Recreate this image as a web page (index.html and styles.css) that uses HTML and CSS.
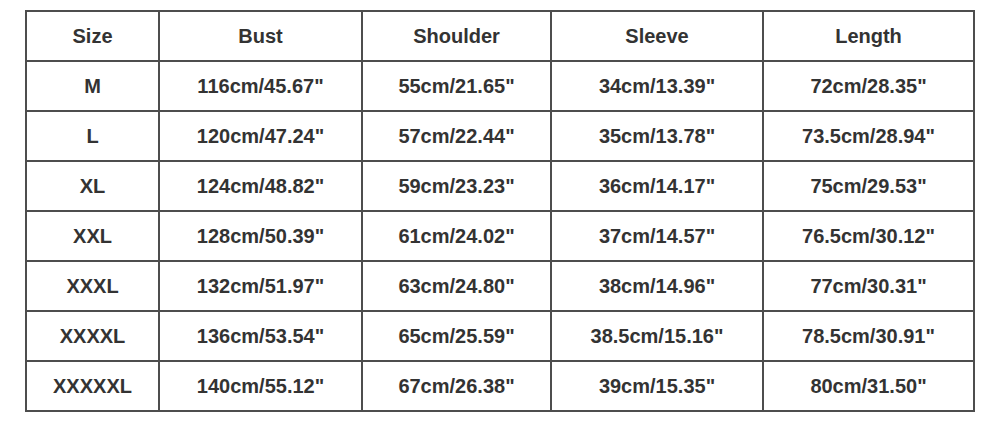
FILE: index.html
```html
<!DOCTYPE html>
<html>
<head>
<meta charset="utf-8">
<link rel="stylesheet" href="styles.css">
</head>
<body>
<table class="size-table">
<colgroup>
<col class="c-size"><col class="c-bust"><col class="c-shoulder"><col class="c-sleeve"><col class="c-length">
</colgroup>
<tr><td>Size</td><td>Bust</td><td>Shoulder</td><td>Sleeve</td><td>Length</td></tr>
<tr><td>M</td><td>116cm/45.67"</td><td>55cm/21.65"</td><td>34cm/13.39"</td><td>72cm/28.35"</td></tr>
<tr><td>L</td><td>120cm/47.24"</td><td>57cm/22.44"</td><td>35cm/13.78"</td><td>73.5cm/28.94"</td></tr>
<tr><td>XL</td><td>124cm/48.82"</td><td>59cm/23.23"</td><td>36cm/14.17"</td><td>75cm/29.53"</td></tr>
<tr><td>XXL</td><td>128cm/50.39"</td><td>61cm/24.02"</td><td>37cm/14.57"</td><td>76.5cm/30.12"</td></tr>
<tr><td>XXXL</td><td>132cm/51.97"</td><td>63cm/24.80"</td><td>38cm/14.96"</td><td>77cm/30.31"</td></tr>
<tr><td>XXXXL</td><td>136cm/53.54"</td><td>65cm/25.59"</td><td>38.5cm/15.16"</td><td>78.5cm/30.91"</td></tr>
<tr><td>XXXXXL</td><td>140cm/55.12"</td><td>67cm/26.38"</td><td>39cm/15.35"</td><td>80cm/31.50"</td></tr>
</table>
</body>
</html>
```
FILE: styles.css
```css
html, body {
  margin: 0;
  padding: 0;
  background: #fff;
}
body {
  padding: 10px 25px;
  font-family: "Liberation Sans", Arial, sans-serif;
}
.size-table {
  border-collapse: collapse;
  table-layout: fixed;
  width: 948px;
}
.c-size { width: 133px; }
.c-bust { width: 203px; }
.c-shoulder { width: 189px; }
.c-sleeve { width: 212px; }
.c-length { width: 211px; }
.size-table td {
  border: 2px solid #4d4d4d;
  height: 48px;
  padding: 0;
  text-align: center;
  vertical-align: middle;
  font-size: 20px;
  font-weight: bold;
  color: #333;
}
```
